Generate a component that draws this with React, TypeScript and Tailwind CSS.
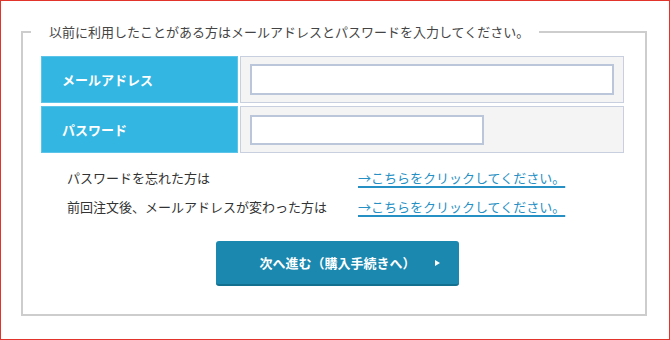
import React from "react";

const font = { fontFamily: '"Noto Sans CJK JP", "Noto Sans", sans-serif' };

const links = [
  { label: "パスワードを忘れた方は", href: "#password" },
  { label: "前回注文後、メールアドレスが変わった方は", href: "#mail" },
];

export default function App() {
  return (
    <div
      className="w-[670px] h-[340px] border border-[#e3342c] bg-white text-[#333333]"
      style={font}
    >
      <fieldset className="ml-[20px] mt-[21px] w-[626px] h-[294px] border-2 border-[#cdcdcd]">
        <legend className="ml-[8px] pl-[18px] pr-[10px] text-[13px] leading-[20px] text-[#444444]">
          以前に利用したことがある方はメールアドレスとパスワードを入力してください。
        </legend>

        {/* Login fields */}
        <div className="ml-[18px] mt-[14px] w-[583px] grid grid-cols-[197px_1fr] gap-x-[2px] gap-y-[3px]">
          <div className="h-[47px] bg-[#33b6e2] border border-[#5cc4e8] flex items-center pl-[20px] text-[13px] font-bold text-white">
            メールアドレス
          </div>
          <div className="h-[47px] bg-[#f4f4f4] border border-[#c8d0e0] flex items-center pl-[9px]">
            <input
              type="text"
              className="w-[364px] h-[31px] bg-white border-2 border-[#bcc6da] outline-none px-2 text-[13px]"
            />
          </div>
          <div className="h-[47px] bg-[#33b6e2] border border-[#5cc4e8] flex items-center pl-[20px] text-[13px] font-bold text-white">
            パスワード
          </div>
          <div className="h-[47px] bg-[#f4f4f4] border border-[#c8d0e0] flex items-center pl-[9px]">
            <input
              type="password"
              className="w-[234px] h-[30px] bg-white border-2 border-[#bcc6da] outline-none px-2 text-[13px]"
            />
          </div>
        </div>

        {/* Help links */}
        <div className="ml-[44px] mt-[15px] flex flex-col gap-[9px]">
          {links.map((item) => (
            <div key={item.href} className="flex text-[13px] leading-[20px]">
              <span className="w-[291px]">{item.label}</span>
              <a
                href={item.href}
                className="text-[#2690c4] underline decoration-[1.5px] underline-offset-[3px]"
              >
                →こちらをクリックしてください。
              </a>
            </div>
          ))}
        </div>

        <button className="relative ml-[193px] mt-[24px] w-[243px] h-[45px] rounded-[3px] bg-[#1b88b0] border-b-2 border-[#14708f] text-white text-[13px] font-bold flex items-center justify-center">
          次へ進む（購入手続きへ）
          <svg
            className="absolute right-[19px] top-1/2 -translate-y-1/2"
            width="5"
            height="6"
            viewBox="0 0 5 6"
          >
            <path d="M0 0 L5 3 L0 6 Z" fill="white" />
          </svg>
        </button>
      </fieldset>
    </div>
  );
}
